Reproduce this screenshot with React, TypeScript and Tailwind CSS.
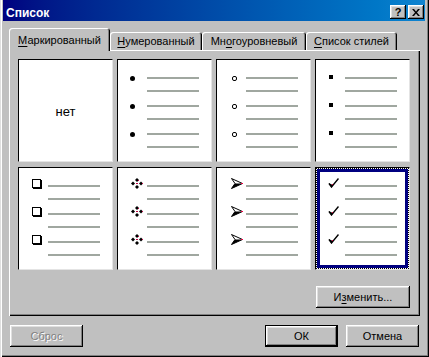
import React from "react";

const raised =
  "shadow-[inset_-1px_-1px_0_#000,inset_1px_1px_0_#fff,inset_-2px_-2px_0_#808080,inset_2px_2px_0_#dfdfdf]";

function TitleBtn({ children }: { children: React.ReactNode }) {
  return (
    <div
      className={`w-[16px] h-[14px] bg-[#c0c0c0] flex items-center justify-center ${raised}`}
    >
      {children}
    </div>
  );
}

function Tab({ active, w, children }: { active?: boolean; w: string; children: React.ReactNode }) {
  return (
    <div
      className={`${w} ${
        active
          ? "h-[23px] -mb-[1px] relative z-10 pt-[6px]"
          : "h-[18px] pt-[3px]"
      } bg-[#c0c0c0] rounded-t-[3px] flex justify-center leading-[13px] whitespace-nowrap shadow-[inset_1px_1px_0_#fff,inset_-1px_0_0_#000,inset_-2px_0_0_#808080]`}
    >
      {children}
    </div>
  );
}

function Btn({
  w,
  def,
  disabled,
  children,
}: {
  w: string;
  def?: boolean;
  disabled?: boolean;
  children: React.ReactNode;
}) {
  return (
    <div
      className={`${w} h-[22px] bg-[#c0c0c0] flex items-center justify-center leading-[13px] ${
        def ? "border border-black" : ""
      } ${raised} ${disabled ? "text-[#808080] [text-shadow:1px_1px_0_#fff]" : ""}`}
    >
      {children}
    </div>
  );
}

const Line = () => <div className="h-[2px] w-[52px] bg-[#a0a7a0]" />;

function Bullets({ bullet, sel }: { bullet: React.ReactNode; sel?: boolean }) {
  return (
    <div className={`flex flex-col gap-[8px] ${sel ? "pt-[8px] pl-[8px]" : "pt-[12px] pl-[12px]"}`}>
      {[0, 1, 2].map((i) => (
        <div key={i} className="flex flex-col">
          <div className="flex items-center h-[12px]">
            <div className="w-[17px] flex items-center">{bullet}</div>
            <Line />
          </div>
          <div className="mt-[6px] ml-[17px]">
            <Line />
          </div>
        </div>
      ))}
    </div>
  );
}

const cellCls =
  "w-[95px] h-[103px] bg-white border border-t-black border-l-black border-r-[#e4e4e4] border-b-[#e4e4e4]";

function Cell({ bullet }: { bullet: React.ReactNode }) {
  return (
    <div className={cellCls}>
      <Bullets bullet={bullet} />
    </div>
  );
}

const Diamonds = () => (
  <svg width="12" height="11" viewBox="0 0 12 11" className="ml-[1px] mb-[5px]">
    <path d="M6 0L8 2L6 4L4 2Z" fill="#000" />
    <path d="M6 7L8 9L6 11L4 9Z" fill="#000" />
    <path d="M0 5.5L2 3.5L4 5.5L2 7.5Z" fill="#000" />
    <path d="M8 5.5L10 3.5L12 5.5L10 7.5Z" fill="#000" />
    <rect x="5" y="5" width="2" height="1" fill="#c00040" />
    <rect x="7" y="2" width="1" height="1" fill="#c00040" />
    <rect x="11" y="5" width="1" height="1" fill="#c00040" />
  </svg>
);

const Arrow = () => (
  <svg width="12" height="11" viewBox="0 0 12 11" className="ml-[2px] mb-[5px]">
    <path d="M0.5 0.5L11.5 5.5L0.5 10.5L4 5.5Z" fill="#fff" stroke="#000" strokeWidth="1" />
    <path d="M4 5.5L11.5 5.5L0.5 10.5Z" fill="#000" />
    <rect x="10" y="5" width="2" height="1" fill="#e00040" />
  </svg>
);

const Check = () => (
  <svg width="11" height="10" viewBox="0 0 11 10" className="mb-[6px]">
    <path d="M1 5.5L3.5 9L10.5 0.5" stroke="#000" strokeWidth="1.4" fill="none" />
    <path d="M0.5 5L3.5 9.5L5 7Z" fill="#000" />
    <rect x="4" y="6" width="1" height="1" fill="#e00040" />
  </svg>
);

export default function App() {
  return (
    <div className="w-[429px] h-[357px] bg-[#c0c0c0] font-['Liberation_Sans',Arial,sans-serif] text-[11px] text-black flex flex-col overflow-hidden select-none shadow-[inset_1px_0_0_#dfdfdf,inset_2px_0_0_#fff,inset_-1px_-1px_0_#000,inset_-2px_-2px_0_#808080]">
      {/* Title bar */}
      <div className="mx-[3px] w-[422px] h-[21px] flex items-start bg-linear-to-r from-[#000080] to-[#1084d0]">
        <span className="mt-[6px] ml-[3px] leading-[14px] text-[12px] font-bold text-white">
          Список
        </span>
        <div className="ml-auto mt-[5px] mr-[1px] flex gap-[2px]">
          <TitleBtn>
            <span className="text-[11px] font-bold leading-[11px] mt-[1px]">?</span>
          </TitleBtn>
          <TitleBtn>
            <svg width="8" height="7" viewBox="0 0 8 7">
              <path d="M0 0L2 0L4 2.5L6 0L8 0L5 3.5L8 7L6 7L4 4.5L2 7L0 7L3 3.5Z" fill="#000" />
            </svg>
          </TitleBtn>
        </div>
      </div>

      {/* Tabs */}
      <div className="mt-[7px] ml-[9px] h-[22px] flex items-end">
        <Tab active w="w-[101px]">
          <span>
            <span className="underline underline-offset-[2px]">М</span>аркированный
          </span>
        </Tab>
        <Tab w="w-[92px]">
          <span>
            <span className="underline underline-offset-[2px]">Н</span>умерованный
          </span>
        </Tab>
        <Tab w="w-[104px]">
          <span>
            Мн<span className="underline underline-offset-[2px]">о</span>гоуровневый
          </span>
        </Tab>
        <Tab w="w-[91px]">
          <span>
            <span className="underline underline-offset-[2px]">С</span>писок стилей
          </span>
        </Tab>
      </div>

      {/* Panel */}
      <div className="ml-[9px] w-[411px] h-[266px] flex flex-col pt-[9px] pl-[9px] shadow-[inset_1px_1px_0_#fff,inset_-1px_-1px_0_#000,inset_-2px_-2px_0_#808080]">
        <div className="grid grid-cols-[repeat(4,95px)] grid-rows-[103px_103px] gap-x-[4px] gap-y-[5px]">
          <div className={`${cellCls} flex items-center justify-center`}>
            <span className="text-[13px] leading-[15px] mt-[1px]">нет</span>
          </div>
          <Cell bullet={<div className="w-[5px] h-[5px] rounded-full bg-black" />} />
          <Cell
            bullet={<div className="ml-[3px] w-[5px] h-[5px] rounded-[2px] border border-black" />}
          />
          <Cell bullet={<div className="ml-[1px] mb-[2px] w-[4px] h-[4px] bg-black" />} />

          <Cell
            bullet={
              <div className="ml-[1px] mb-[6px] w-[9px] h-[9px] border border-black bg-white shadow-[1px_1px_0_#000]" />
            }
          />
          <Cell bullet={<Diamonds />} />
          <Cell bullet={<Arrow />} />
          <div className={cellCls}>
            <div className="w-full h-full border border-dotted border-black">
              <div className="w-full h-full border-[3px] border-[#000080]">
                <Bullets bullet={<Check />} sel />
              </div>
            </div>
          </div>
        </div>
        <div className="mt-[16px] flex justify-end pr-[10px]">
          <Btn w="w-[94px]">
            <span>
              И<span className="underline underline-offset-[2px]">з</span>менить...
            </span>
          </Btn>
        </div>
      </div>

      {/* Bottom buttons */}
      <div className="mt-[9px] flex px-[10px]">
        <Btn w="w-[73px]" disabled>
          Сброс
        </Btn>
        <div className="ml-auto flex gap-[8px]">
          <Btn w="w-[73px]" def>
            ОК
          </Btn>
          <Btn w="w-[73px]">Отмена</Btn>
        </div>
      </div>
    </div>
  );
}
